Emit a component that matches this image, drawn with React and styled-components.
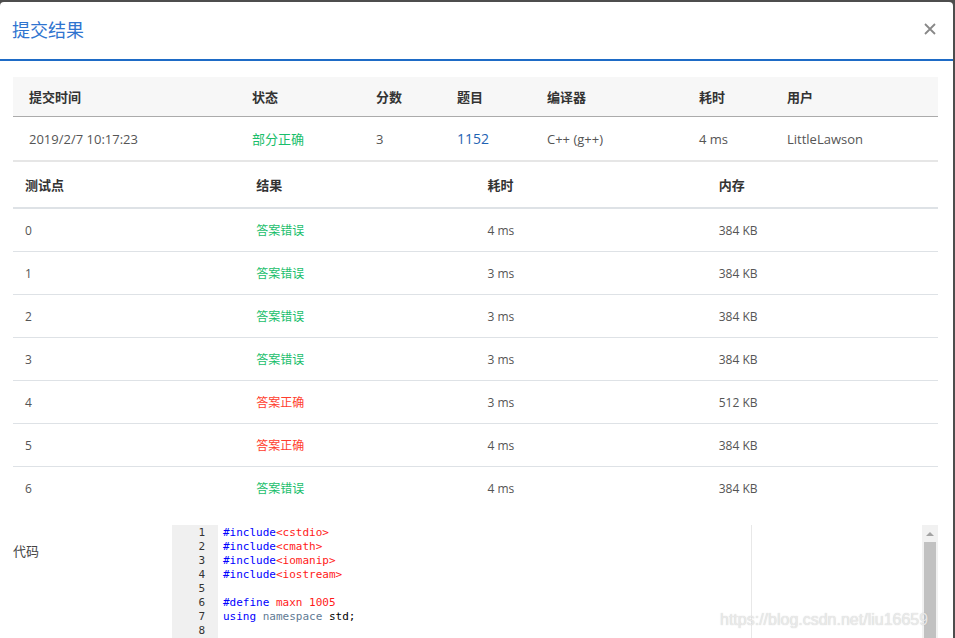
import React from "react";
import styled, { createGlobalStyle } from "styled-components";

const Global = createGlobalStyle`
  html, body { margin: 0; padding: 0; background: #4d4d4d; height: 100%; overflow: hidden; }
  body { font-family: "Open Sans", "Noto Sans CJK SC", sans-serif; }
`;

const Modal = styled.div`
  margin: 2px 2px 0 0;
  background: #fff;
  border-radius: 4px 4px 0 0;
  height: 700px;
  position: relative;
  overflow: hidden;
`;

const Header = styled.div`
  height: 57px;
  display: flex;
  align-items: center;
  justify-content: space-between;
  padding: 0 17px 0 12px;
  border-bottom: 2px solid #1e6bc6;
`;

const Title = styled.h4`
  margin: 0;
  font-size: 18px;
  font-weight: 400;
  color: #2f74cf;
  font-family: "Noto Sans CJK SC", sans-serif;
  position: relative;
  top: -2px;
`;

const Close = styled.button`
  border: 0;
  background: none;
  padding: 0;
  width: 12px;
  height: 12px;
  display: flex;
  cursor: pointer;
  position: relative;
  top: -2px;
`;

const Body = styled.div`
  padding: 16px 15px 0 13px;
`;

const Table = styled.table`
  width: 100%;
  border-collapse: collapse;
  table-layout: fixed;
  font-size: 13px;
  color: #555;
`;

const SumHead = styled.th`
  background: #f7f7f7;
  height: 39px;
  text-align: left;
  font-weight: 600;
  color: #333;
  padding: 0 0 0 16px;
  border-bottom: 1px solid #ababab;
  font-size: 13px;
`;

const SumCell = styled.td`
  height: 43px;
  padding: 0 0 0 16px;
  border-bottom: 2px solid #e6e6e6;
  color: ${(p) => p.$color || "#555"};
  font-size: ${(p) => (p.$big ? "14px" : "13px")};
  white-space: nowrap;
`;

const TestHead = styled.th`
  height: 45px;
  text-align: left;
  font-weight: 600;
  color: #333;
  padding: 0 0 0 12px;
  border-bottom: 2px solid #dee2e6;
`;

const TestCell = styled.td`
  height: 42px;
  padding: 0 0 0 12px;
  border-top: ${(p) => (p.$first ? "0" : "1px solid #dee2e6")};
  color: ${(p) => p.$color || "#555"};
  font-size: 12px;
`;

const CodeSection = styled.div`
  display: flex;
  margin-top: 16px;
`;

const CodeLabel = styled.div`
  width: 159px;
  flex: none;
  font-size: 13px;
  color: #444;
  padding-top: 16px;
`;

const Editor = styled.div`
  flex: 1;
  display: flex;
  height: 140px;
  position: relative;
  font-family: "DejaVu Sans Mono", monospace;
  font-size: 11px;
  line-height: 14px;
`;

const Gutter = styled.div`
  width: 46px;
  flex: none;
  background: #f0f0f0;
  color: #333;
  text-align: right;
  padding: 1px 13px 0 0;
  box-sizing: border-box;
`;

const Lines = styled.div`
  flex: 1;
  padding: 1px 0 0 5px;
  position: relative;
  color: #000;
  white-space: pre;
`;

const PrintMargin = styled.div`
  position: absolute;
  left: 533px;
  top: 0;
  bottom: 0;
  width: 1px;
  background: #e8e8e8;
`;

const Scroll = styled.div`
  width: 16px;
  flex: none;
  background: #f1f1f1;
  display: flex;
  flex-direction: column;
  align-items: center;
`;

const Arrow = styled.div`
  width: 0;
  height: 0;
  margin-top: 7px;
  border-left: 4px solid transparent;
  border-right: 4px solid transparent;
  border-bottom: 4px solid #a3a3a3;
`;

const Thumb = styled.div`
  width: 12px;
  flex: 1;
  margin-top: 6px;
  background: #c1c1c1;
`;

const Tok = styled.span`
  color: ${(p) => p.$c};
`;

const Watermark = styled.div`
  position: absolute;
  left: 720px;
  top: 609px;
  font-family: "Liberation Sans", Arial, sans-serif;
  font-size: 16px;
  color: rgba(238, 238, 238, 0.9);
  text-shadow: 0 0 1px rgba(140, 140, 140, 0.5);
  white-space: nowrap;
`;

const BLUE = "#0000ff";
const RED = "#ff1a1a";
const GRAY = "#5f7a94";
const GREEN = "#19be6b";
const ERR = "#ff3d2d";

const tests = [
  ["0", "答案错误", "4 ms", "384 KB"],
  ["1", "答案错误", "3 ms", "384 KB"],
  ["2", "答案错误", "3 ms", "384 KB"],
  ["3", "答案错误", "3 ms", "384 KB"],
  ["4", "答案正确", "3 ms", "512 KB"],
  ["5", "答案正确", "4 ms", "384 KB"],
  ["6", "答案错误", "4 ms", "384 KB"],
];

const code = [
  [["#include", BLUE], ["<cstdio>", RED]],
  [["#include", BLUE], ["<cmath>", RED]],
  [["#include", BLUE], ["<iomanip>", RED]],
  [["#include", BLUE], ["<iostream>", RED]],
  [],
  [["#define", BLUE], [" "], ["maxn 1005", RED]],
  [["using", BLUE], [" "], ["namespace", GRAY], [" std;"]],
  [],
  [],
];

export default function App() {
  return (
    <>
      <Global />
      <Modal>
        <Header>
          <Title>提交结果</Title>
          <Close aria-label="close">
            <svg width="12" height="12" viewBox="0 0 12 12">
              <path d="M1 1L11 11M11 1L1 11" stroke="#888" strokeWidth="1.8" />
            </svg>
          </Close>
        </Header>
        <Body>
          <Table>
            <colgroup>
              <col style={{ width: 223 }} />
              <col style={{ width: 124 }} />
              <col style={{ width: 81 }} />
              <col style={{ width: 90 }} />
              <col style={{ width: 152 }} />
              <col style={{ width: 88 }} />
              <col />
            </colgroup>
            <thead>
              <tr>
                <SumHead>提交时间</SumHead>
                <SumHead>状态</SumHead>
                <SumHead>分数</SumHead>
                <SumHead>题目</SumHead>
                <SumHead>编译器</SumHead>
                <SumHead>耗时</SumHead>
                <SumHead>用户</SumHead>
              </tr>
            </thead>
            <tbody>
              <tr>
                <SumCell>2019/2/7 10:17:23</SumCell>
                <SumCell $color={GREEN}>部分正确</SumCell>
                <SumCell>3</SumCell>
                <SumCell $color="#1f63b3" $big>1152</SumCell>
                <SumCell>C++ (g++)</SumCell>
                <SumCell>4 ms</SumCell>
                <SumCell>LittleLawson</SumCell>
              </tr>
            </tbody>
          </Table>
          <Table>
            <thead>
              <tr>
                <TestHead>测试点</TestHead>
                <TestHead>结果</TestHead>
                <TestHead>耗时</TestHead>
                <TestHead>内存</TestHead>
              </tr>
            </thead>
            <tbody>
              {tests.map((t, i) => (
                <tr key={t[0]}>
                  <TestCell $first={i === 0}>{t[0]}</TestCell>
                  <TestCell $first={i === 0} $color={t[1] === "答案错误" ? GREEN : ERR}>
                    {t[1]}
                  </TestCell>
                  <TestCell $first={i === 0}>{t[2]}</TestCell>
                  <TestCell $first={i === 0}>{t[3]}</TestCell>
                </tr>
              ))}
            </tbody>
          </Table>
          <CodeSection>
            <CodeLabel>代码</CodeLabel>
            <Editor>
              <Gutter>
                {code.map((_, i) => (
                  <div key={i}>{i + 1}</div>
                ))}
              </Gutter>
              <Lines>
                <PrintMargin />
                {code.map((line, i) => (
                  <div key={i}>
                    {line.length === 0
                      ? " "
                      : line.map(([txt, c], j) => (
                          <Tok key={j} $c={c || "#000"}>
                            {txt}
                          </Tok>
                        ))}
                  </div>
                ))}
              </Lines>
              <Scroll>
                <Arrow />
                <Thumb />
              </Scroll>
            </Editor>
          </CodeSection>
        </Body>
        <Watermark>https://blog.csdn.net/liu16659</Watermark>
      </Modal>
    </>
  );
}
